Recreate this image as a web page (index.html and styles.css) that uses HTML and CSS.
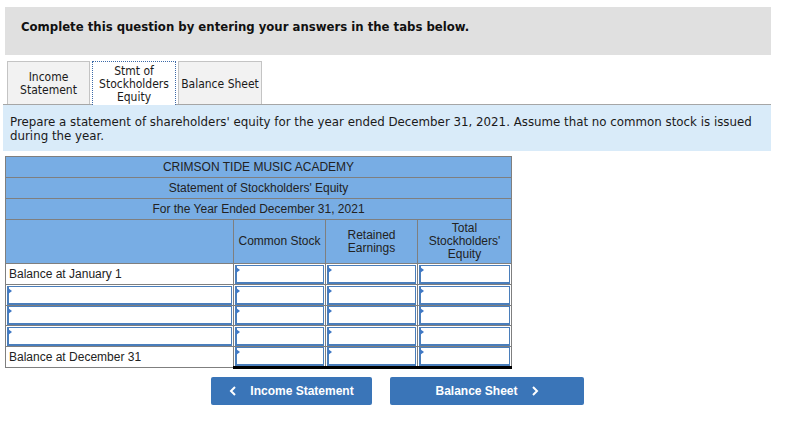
FILE: index.html
```html
<!DOCTYPE html>
<html lang="en">

<head>
    <meta charset="UTF-8">
    <meta name="viewport" content="width=device-width, initial-scale=1.0">
    <title>Stmt of Stockholders Equity</title>
    <link rel="stylesheet" href="styles.css">
</head>

<body>
    <div class="page">
        <div class="prompt">Complete this question by entering your answers in the tabs below.</div>

        <div class="tabs">
            <div class="tab">Income<br>Statement</div>
            <div class="tab active">Stmt of<br>Stockholders<br>Equity</div>
            <div class="tab">Balance Sheet</div>
        </div>

        <div class="instructions">
            Prepare a statement of shareholders' equity for the year ended December 31, 2021. Assume that no common stock is issued during the year.
        </div>

        <table class="statement">
            <colgroup>
                <col class="col-label">
                <col class="col-value">
                <col class="col-value">
                <col class="col-total">
            </colgroup>
            <thead>
                <tr class="title-row">
                    <th colspan="4">CRIMSON TIDE MUSIC ACADEMY</th>
                </tr>
                <tr class="title-row">
                    <th colspan="4">Statement of Stockholders' Equity</th>
                </tr>
                <tr class="title-row">
                    <th colspan="4">For the Year Ended December 31, 2021</th>
                </tr>
                <tr class="head-row">
                    <th></th>
                    <th>Common Stock</th>
                    <th>Retained<br>Earnings</th>
                    <th>Total<br>Stockholders'<br>Equity</th>
                </tr>
            </thead>
            <tbody>
                <tr>
                    <td class="label">Balance at January 1</td>
                    <td><div class="field"><input type="text"></div></td>
                    <td><div class="field"><input type="text"></div></td>
                    <td><div class="field"><input type="text"></div></td>
                </tr>
                <tr>
                    <td><div class="field"><input type="text"></div></td>
                    <td><div class="field"><input type="text"></div></td>
                    <td><div class="field"><input type="text"></div></td>
                    <td><div class="field"><input type="text"></div></td>
                </tr>
                <tr class="short">
                    <td><div class="field"><input type="text"></div></td>
                    <td><div class="field"><input type="text"></div></td>
                    <td><div class="field"><input type="text"></div></td>
                    <td><div class="field"><input type="text"></div></td>
                </tr>
                <tr>
                    <td><div class="field"><input type="text"></div></td>
                    <td><div class="field"><input type="text"></div></td>
                    <td><div class="field"><input type="text"></div></td>
                    <td><div class="field"><input type="text"></div></td>
                </tr>
                <tr class="total-row">
                    <td class="label">Balance at December 31</td>
                    <td><div class="field"><input type="text"></div></td>
                    <td><div class="field"><input type="text"></div></td>
                    <td><div class="field"><input type="text"></div></td>
                </tr>
            </tbody>
        </table>

        <div class="nav">
            <button class="nav-btn prev">
                <svg width="8" height="10" viewBox="0 0 8 10"><polyline points="6,1 2,5 6,9" fill="none" stroke="white" stroke-width="2"/></svg>
                Income Statement
            </button>
            <button class="nav-btn next">
                Balance Sheet
                <svg width="8" height="10" viewBox="0 0 8 10"><polyline points="2,1 6,5 2,9" fill="none" stroke="white" stroke-width="2"/></svg>
            </button>
        </div>
    </div>
</body>

</html>
```

FILE: styles.css
```css
* {
    margin: 0;
    padding: 0;
    box-sizing: border-box;
}

body {
    background: white;
    font-family: 'DejaVu Sans Condensed', 'DejaVu Sans', sans-serif;
    color: #1a1a1a;
}

.page {
    width: 768px;
    margin-left: 3px;
    padding-top: 7px;
}

.prompt {
    margin-left: 2px;
    height: 48px;
    background: #e0e0e0;
    padding-left: 16px;
    padding-bottom: 10px;
    display: flex;
    align-items: center;
    font-size: 13px;
    font-weight: bold;
    color: #111;
}

.tabs {
    display: flex;
    gap: 2px;
    margin-top: 6px;
    padding-left: 4px;
    border-bottom: 1px solid #a6a6a6;
}

.tab {
    width: 84px;
    height: 43px;
    padding-top: 2px;
    border: 1px solid #c4c4c4;
    border-bottom: none;
    background: #f2f2f2;
    display: flex;
    align-items: center;
    justify-content: center;
    text-align: center;
    font-size: 12px;
    line-height: 13px;
}

.tab:first-child {
    width: 83px;
}

.tab.active {
    background: white;
    border: 1px dotted #3d6aa8;
    border-bottom: none;
    margin-bottom: -1px;
    height: 44px;
}

.instructions {
    background: #d9ebf9;
    height: 46px;
    padding: 10px 7px 0;
    font-size: 13.15px;
    line-height: 14px;
}

.statement {
    margin-top: 5px;
    margin-left: 2px;
    width: 507px;
    border-collapse: collapse;
    table-layout: fixed;
    font-family: 'Liberation Sans', Arial, sans-serif;
    font-size: 12px;
    color: #222;
}

.col-label {
    width: 228px;
}

.col-value {
    width: 92px;
}

.col-total {
    width: 94px;
}

.statement th,
.statement td {
    border: 1px solid #7f7f7f;
    padding: 0;
}

.statement th {
    background: #78ade4;
    font-weight: normal;
    text-align: center;
    line-height: 13px;
}

.title-row th {
    height: 21px;
}

.head-row th {
    height: 44px;
}

.statement td {
    height: 21px;
    background: white;
}

.statement tr.short td {
    height: 20px;
}

.statement td.label {
    padding-left: 3px;
}

.field {
    position: relative;
    height: 19px;
    margin: 0 1px 0 1px;
}

.field input {
    width: 100%;
    height: 100%;
    border: 1px solid #4a7ebb;
    border-width: 1px 1px 2px 2px;
    outline: none;
    background: white;
}

.field::before {
    content: "";
    position: absolute;
    top: 2px;
    left: 1px;
    border-left: 4px solid #3f78c4;
    border-top: 3px solid transparent;
    border-bottom: 3px solid transparent;
}

.total-row td {
    border-top: 1px solid #000;
}

.total-row td:not(.label) {
    border-bottom: 3px solid #000;
}

.total-row td.label {
    border-top: 1px solid #7f7f7f;
}

.nav {
    display: flex;
    gap: 18px;
    margin-top: 8px;
    padding-left: 208px;
}

.nav-btn {
    height: 28px;
    background: #3a75b8;
    border: none;
    border-radius: 2px;
    color: white;
    font-family: 'Liberation Sans', Arial, sans-serif;
    font-size: 12px;
    font-weight: bold;
    display: flex;
    align-items: center;
    justify-content: center;
    gap: 13px;
}

.prev {
    width: 161px;
}

.next {
    width: 194px;
}
```
